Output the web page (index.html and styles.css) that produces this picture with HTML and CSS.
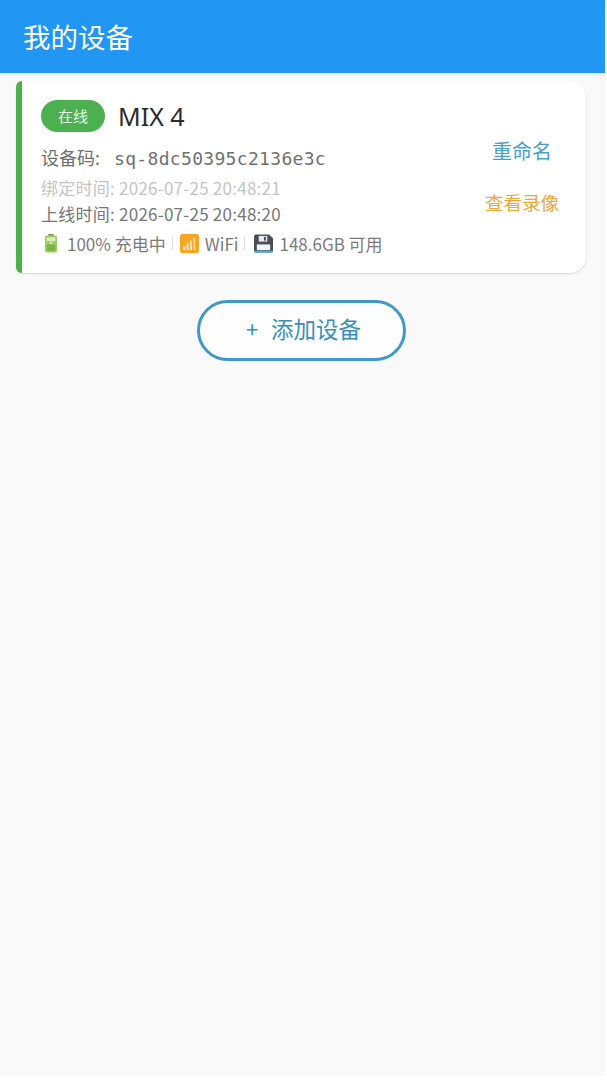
FILE: index.html
```html
<!DOCTYPE html>
<html lang="zh-CN">

<head>
    <meta charset="UTF-8">
    <title>我的设备</title>
    <link rel="stylesheet" href="styles.css">
</head>

<body>
    <div class="app">
        <header class="topbar">我的设备</header>

        <main class="content">
            <div class="device-card">
                <div class="device-info">
                    <div class="device-head">
                        <span class="status-badge">在线</span>
                        <span class="device-name">MIX 4</span>
                    </div>
                    <div class="device-code">设备码: <span class="code-value">sq-8dc50395c2136e3c</span></div>
                    <div class="time-row time-bound">绑定时间: 2026-07-25 20:48:21</div>
                    <div class="time-row">上线时间: 2026-07-25 20:48:20</div>
                    <div class="device-stats">
                        <svg class="stat-icon stat-battery" viewBox="0 0 20 20">
                            <rect x="7" y="0" width="6" height="3" rx="1" fill="#7a9a5c" />
                            <rect x="3.5" y="1.5" width="13" height="18" rx="2.5" fill="#9ccc65" />
                            <rect x="5.5" y="3.5" width="9" height="4" fill="#dcedc8" />
                            <rect x="5.5" y="11" width="9" height="6.5" rx="1" fill="#7cb342" />
                            <rect x="9" y="8.5" width="2" height="2" fill="#f1f8e9" />
                        </svg>
                        <span>100% 充电中</span>
                        <span class="divider"></span>
                        <svg class="stat-icon" viewBox="0 0 20 20">
                            <rect width="20" height="20" rx="2.5" fill="#f5a623" />
                            <rect x="3.5" y="13" width="2" height="4" fill="#fff3d6" />
                            <rect x="7" y="10" width="2" height="7" fill="#fff3d6" />
                            <rect x="10.5" y="7" width="2" height="10" fill="#ffe6b0" />
                            <rect x="14" y="4" width="2" height="13" fill="#ffd98a" />
                        </svg>
                        <span>WiFi</span>
                        <span class="divider"></span>
                        <svg class="stat-icon stat-disk" viewBox="0 0 20 20">
                            <path d="M0 2.5A2 2 0 0 1 2 .5h14l4 4V18a2 2 0 0 1-2 1.5H2A2 2 0 0 1 0 18z" fill="#4a4f57" />
                            <rect x="5" y="2" width="9" height="6" fill="#e8eaed" />
                            <rect x="10.5" y="3" width="2" height="4" fill="#4a4f57" />
                            <rect x="3" y="11" width="14" height="6" fill="#f4f6f8" />
                            <rect x="0" y="17.5" width="20" height="2" fill="#4fa8d8" />
                        </svg>
                        <span>148.6GB 可用</span>
                    </div>
                </div>
                <div class="device-actions">
                    <a class="action action-rename">重命名</a>
                    <a class="action action-video">查看录像</a>
                </div>
            </div>

            <button class="add-btn"><span class="add-plus">+</span>添加设备</button>
        </main>
    </div>
</body>

</html>
```

FILE: styles.css
```css
* {
    box-sizing: border-box;
}

body {
    margin: 0;
    background: #fff;
    font-family: "Noto Sans CJK SC", "Noto Sans", sans-serif;
}

.app {
    width: 605px;
    height: 1076px;
    background: #f9f9f9;
}

.topbar {
    height: 73px;
    padding: 15px 23px 0;
    background: #2196f3;
    color: #fff;
    font-size: 27.5px;
    line-height: 43px;
    box-shadow: 0 1px 4px rgba(0, 0, 0, 0.1);
}

.content {
    padding: 8px 19px 0 16px;
}

.device-card {
    display: flex;
    justify-content: space-between;
    height: 192px;
    padding: 19px 27px 0 19px;
    background: #fff;
    border-left: 6px solid #4caf50;
    border-radius: 6px 16px 16px 6px;
    box-shadow: 0 1px 2px rgba(0, 0, 0, 0.14);
}

.device-head {
    display: flex;
    align-items: center;
    gap: 13px;
    height: 32px;
}

.status-badge {
    width: 64px;
    height: 32px;
    border-radius: 16px;
    background: #4caf50;
    color: #e8f5e9;
    font-size: 15px;
    line-height: 32px;
    text-align: center;
}

.device-name {
    color: #2b2b2b;
    font-family: "Noto Sans", sans-serif;
    font-size: 25px;
}

.device-code {
    margin-top: 11px;
    height: 28px;
    color: #707070;
    font-size: 18px;
    line-height: 28px;
}

.code-value {
    margin-left: 10px;
    font-family: "DejaVu Sans Mono", monospace;
    font-size: 18px;
    letter-spacing: 0.32px;
}

.time-row {
    height: 26px;
    color: #777;
    font-size: 17px;
    line-height: 26px;
    letter-spacing: 0.25px;
}

.time-bound {
    margin-top: 4px;
    color: #c4c4c4;
}

.device-stats {
    display: flex;
    align-items: center;
    gap: 6px;
    margin-top: 3px;
    height: 26px;
    color: #7b7b7b;
    font-size: 17px;
}

.stat-icon {
    width: 19px;
    height: 19px;
}

.stat-battery {
    width: 20px;
}

.stat-disk {
    margin-left: 2px;
}

.divider {
    width: 1px;
    height: 14px;
    margin-right: 1px;
    background: #e0e0e0;
}

.device-actions {
    display: flex;
    flex-direction: column;
    align-items: center;
    gap: 23px;
    padding-top: 36px;
}

.action {
    line-height: 29px;
}

.action-rename {
    color: #4a9fc8;
    font-size: 20px;
}

.action-video {
    color: #e5a83b;
    font-size: 18.5px;
}

.add-btn {
    display: block;
    width: 209px;
    height: 61px;
    margin: 27px auto 0;
    padding: 0 0 5px 5px;
    border: 3px solid #4098c6;
    border-radius: 31px;
    background: #fdfdfd;
    color: #3c8fb8;
    font-family: inherit;
    font-size: 22.5px;
}

.add-plus {
    margin-right: 13px;
    font-size: 22px;
}
```
